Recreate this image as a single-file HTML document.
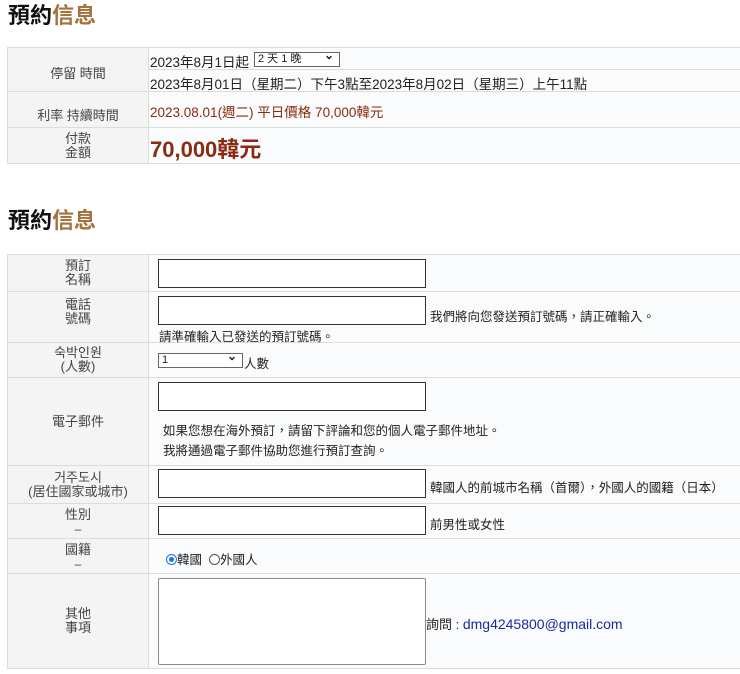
<!DOCTYPE html>
<html><head><meta charset="utf-8"><style>
*{margin:0;padding:0;box-sizing:border-box}
body{width:740px;height:674px;background:#fff;font-family:"Liberation Sans","Noto Sans CJK TC",sans-serif;font-size:13px;color:#222;position:relative;overflow:hidden}
h2{position:absolute;left:8px;font-size:22px;font-weight:bold;color:#111;line-height:26px}
h2 span{color:#a5723c}
.lab{position:absolute;left:7px;width:142px;background:#f4f4f4;border:1px solid #dcdcdc;color:#444;text-align:center;font-size:13px;line-height:14px;display:flex;flex-direction:column;justify-content:center;align-items:center}
.val{position:absolute;left:148px;width:600px;background:#fafbfc;border:1px solid #dcdcdc}
.in{position:absolute;left:158px;width:268px;height:29px;border:1px solid #333;background:#fff}
.t{position:absolute;white-space:nowrap;font-size:12.5px}
.sel{position:absolute;border:1px solid #666;background:#fff;font-size:11px;height:15px;line-height:13px;padding-left:3px}
.sel:after{content:"⌄";position:absolute;right:5px;top:-4px;font-weight:bold;font-size:12px}
.d{position:absolute;left:7px;width:142px;text-align:center;color:#444;font-size:12px}
</style></head><body>
<h2 style="top:3px">預約<span>信息</span></h2>
<div class="lab" style="top:47px;height:45px;padding-top:8px">停留 時間</div>
<div class="val" style="top:47px;height:23px"></div>
<div class="val" style="top:69px;height:23px"></div>
<div class="lab" style="top:91px;height:37px;padding-top:12px">利率 持續時間</div>
<div class="val" style="top:91px;height:37px"></div>
<div class="lab" style="top:127px;height:37px">付款<br>金額</div>
<div class="val" style="top:127px;height:37px"></div>
<div class="t" style="left:150px;top:51px;font-size:13.5px">2023年8月1日起</div>
<div class="sel" style="left:254px;top:52px;width:86px">2 天 1 晚</div>
<div class="t" style="left:150px;top:73px;font-size:13.5px">2023年8月01日（星期二）下午3點至2023年8月02日（星期三）上午11點</div>
<div class="t" style="left:150px;top:101px;color:#8b2a12;font-size:13.5px">2023.08.01(週二) 平日價格 70,000韓元</div>
<div class="t" style="left:150px;top:132px;color:#8b2a12;font-size:22px;font-weight:bold">70,000韓元</div>

<h2 style="top:208px">預約<span>信息</span></h2>
<div class="lab" style="top:254px;height:38px">預訂<br>名稱</div><div class="val" style="top:254px;height:38px"></div>
<div class="lab" style="top:291px;height:52px;padding-bottom:10px">電話<br>號碼</div><div class="val" style="top:291px;height:52px"></div>
<div class="lab" style="top:342px;height:36px">숙박인원<br>(人數)</div><div class="val" style="top:342px;height:36px"></div>
<div class="lab" style="top:377px;height:89px">電子郵件</div><div class="val" style="top:377px;height:89px"></div>
<div class="lab" style="top:465px;height:39px">거주도시<br>(居住國家或城市)</div><div class="val" style="top:465px;height:39px"></div>
<div class="lab" style="top:503px;height:36px;justify-content:flex-start;padding-top:4px">性別</div><div class="val" style="top:503px;height:36px"></div>
<div class="d" style="top:522px">–</div>
<div class="lab" style="top:538px;height:36px;justify-content:flex-start;padding-top:4px">國籍</div><div class="val" style="top:538px;height:36px"></div>
<div class="d" style="top:557px">–</div>
<div class="lab" style="top:573px;height:96px">其他<br>事項</div><div class="val" style="top:573px;height:96px"></div>

<div class="in" style="top:259px"></div>
<div class="in" style="top:296px"></div>
<div class="t" style="left:430px;top:306px">我們將向您發送預訂號碼，請正確輸入。</div>
<div class="t" style="left:159px;top:326px">請準確輸入已發送的預訂號碼。</div>
<div class="sel" style="left:158px;top:353px;width:85px">1</div>
<div class="t" style="left:244px;top:353px">人數</div>
<div class="in" style="top:382px"></div>
<div class="t" style="left:163px;top:420px">如果您想在海外預訂，請留下評論和您的個人電子郵件地址。</div>
<div class="t" style="left:163px;top:440px">我將通過電子郵件協助您進行預訂查詢。</div>
<div class="in" style="top:469px"></div>
<div class="t" style="left:430px;top:477px">韓國人的前城市名稱（首爾），外國人的國籍（日本）</div>
<div class="in" style="top:506px"></div>
<div class="t" style="left:430px;top:514px">前男性或女性</div>
<div class="t" style="left:166px;top:549px"><span style="display:inline-block;width:11px;height:11px;border-radius:50%;border:1px solid #1a73e8;vertical-align:-1px;position:relative"><span style="position:absolute;left:2px;top:2px;width:5px;height:5px;border-radius:50%;background:#1a73e8"></span></span>韓國 &nbsp;<span style="display:inline-block;width:11px;height:11px;border-radius:50%;border:1px solid #555;vertical-align:-1px"></span>外國人</div>
<div class="in" style="top:578px;height:87px;border-color:#888;border-radius:2px"></div>
<div class="t" style="left:426px;top:614px;font-size:13px">詢問 : <span style="color:#1a2a9a;font-size:14px">dmg4245800@gmail.com</span></div>
</body></html>
